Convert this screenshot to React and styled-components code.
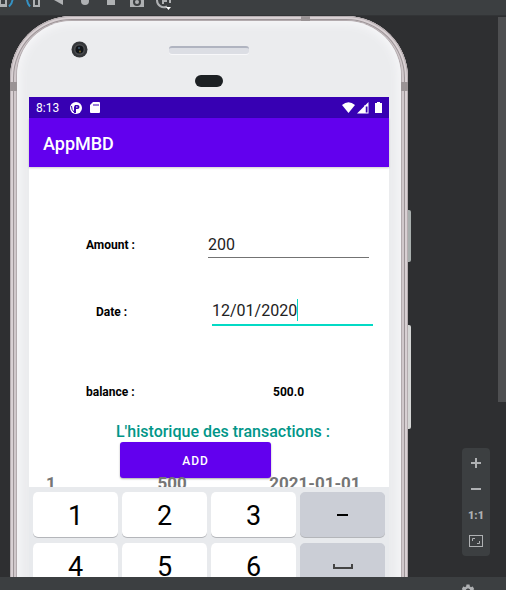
import React from "react";
import styled, { createGlobalStyle } from "styled-components";
import { MdSettings } from "react-icons/md";

const GlobalStyle = createGlobalStyle`
  * { box-sizing: border-box; }
  body { margin: 0; font-family: Roboto, sans-serif; background: #2e2f31; }
  button, input { font-family: inherit; }
`;

const Page = styled.div`
  display: flex;
  flex-direction: column;
  height: 100vh;
  overflow: hidden;
`;

const Toolbar = styled.header`
  display: flex;
  flex: none;
  gap: 4px;
  height: 15px;
  overflow: hidden;
  background: #3c3f41;
`;

const ToolButton = styled.button`
  flex: none;
  width: 22px;
  height: 15px;
  padding: 0;
  border: 0;
  background: none;

  svg { display: block; }
`;

const Stage = styled.main`
  display: grid;
  grid-template-columns: minmax(0, 1fr) 98px;
  grid-template-rows: minmax(0, 1fr);
  flex: 1;
  min-height: 0;
  overflow: hidden;
  border-top: 1px solid #323436;
`;

const Device = styled.section`
  position: relative;
  align-self: start;
  margin-left: 10px;
  padding: 5px 7px 40px;
  border-radius: 62px 62px 0 0;
  background: #d0c8cb;
  box-shadow: inset 0 0 0 1px #b5adb0, inset 0 0 0 3px #d8d0d3, inset 0 0 0 4px #9c9497;
`;

const Antenna = styled.span`
  position: absolute;
  background: #9a9395;
  ${(p) =>
    p.$side === "top"
      ? "top: 0; right: 98px; width: 9px; height: 5px;"
      : `top: 66px; ${p.$side}: 0; width: 7px; height: 9px;`}
`;

const SideKey = styled.span`
  position: absolute;
  left: 100%;
  top: ${(p) => p.$top}px;
  width: 3px;
  height: ${(p) => p.$length}px;
  border-radius: 0 2px 2px 0;
  background: ${(p) => p.$color};
`;

const Face = styled.div`
  padding: 0 12px;
  border-radius: 55px 55px 0 0;
  background: #ebecee;
  box-shadow: inset 0 0 8px 3px #f6f6f8, 0 0 0 1px #b3abae;
`;

const Forehead = styled.div`
  display: grid;
  grid-template-columns: 1fr 80px 1fr;
  align-items: start;
  height: 76px;
`;

const CameraSlot = styled.div`
  padding: 20px 0 0 42px;

  svg { display: block; }
`;

const Openings = styled.div`
  display: flex;
  flex-direction: column;
  align-items: center;
  gap: 21px;
  padding-top: 25px;
`;

const Speaker = styled.div`
  width: 80px;
  height: 8px;
  border-top: 2px solid #b0b4c0;
  border-radius: 3px;
  background: #dcdee4;
  box-shadow: 0 1px 0 #f8f8fa;
`;

const Sensor = styled.div`
  width: 28px;
  height: 12px;
  border-radius: 6px;
  background: #1c2023;
`;

const Screen = styled.div`
  background: #fff;
`;

const StatusBar = styled.div`
  display: flex;
  align-items: center;
  height: 21px;
  padding: 0 7px;
  background: #3700b3;
  color: #fff;
  font-size: 12px;
`;

const StatusIcons = styled.div`
  display: flex;
  align-items: center;
  ${(p) => (p.$end ? "margin-left: auto; gap: 2px;" : "margin-left: 10px; gap: 7px;")}
`;

const AppBar = styled.div`
  display: flex;
  align-items: center;
  height: 49px;
  padding: 1px 14px 0;
  background: #6200ee;
  color: #fff;
  box-shadow: 0 1px 2px #0003;
`;

const AppTitle = styled.h1`
  margin: 0;
  font-size: 18px;
  font-weight: 500;
`;

const Form = styled.form`
  padding-top: 64px;
`;

const FormRow = styled.div`
  display: grid;
  grid-template-columns: ${(p) => p.$label}px 1fr;
  align-items: center;
  height: 28px;
  margin-bottom: ${(p) => p.$after}px;
  padding-left: ${(p) => p.$start}px;
  padding-right: ${(p) => p.$end}px;
`;

const Label = styled.label`
  color: #000;
  font-size: 12px;
  font-weight: 700;
`;

const Balance = styled.output`
  color: #000;
  font-size: 12px;
  font-weight: 700;
`;

const Field = styled.div`
  position: relative;
  min-width: 0;
`;

const TextInput = styled.input`
  display: block;
  width: 100%;
  height: ${(p) => (p.$active ? 28 : 26)}px;
  padding: ${(p) => (p.$active ? "0 0 2px" : "0")};
  border: 0;
  border-bottom: ${(p) => (p.$active ? "2px solid #03dac5" : "1px solid #737373")};
  border-radius: 0;
  outline: none;
  background: none;
  color: #222;
  font-size: 16px;
`;

const Caret = styled.span`
  position: absolute;
  top: 1px;
  left: 85px;
  width: 1px;
  height: 22px;
  background: #03dac5;
`;

const HistoryTitle = styled.h2`
  margin: 0;
  padding-left: 28px;
  color: #019688;
  font-size: 16px;
  font-weight: 500;
  line-height: 20px;
  text-align: center;
`;

const AddButton = styled.button`
  display: block;
  width: 42%;
  height: 36px;
  margin-left: 91px;
  padding: 1px 0 0;
  border: 0;
  border-radius: 3px;
  background: #6200ee;
  color: #fff;
  font-size: 12px;
  font-weight: 500;
  letter-spacing: 1px;
  box-shadow: 0 1px 2px #0005;
`;

const History = styled.table`
  width: 100%;
  border-collapse: collapse;
  table-layout: fixed;
`;

const HistoryCell = styled.td`
  width: ${(p) => p.$width};
  height: 9px;
  padding: 0 0 0 17px;
  color: #757575;
  font-size: 17px;
  font-weight: 700;
  line-height: 9px;
`;

const HistoryText = styled.div`
  height: 9px;
  line-height: 10px;
`;

const Keyboard = styled.div`
  position: relative;
  display: grid;
  grid-template-columns: repeat(4, 1fr);
  gap: 6px 4px;
  padding: 5px 4px;
  background: #e8eaed;
`;

const Key = styled.button`
  display: flex;
  align-items: center;
  justify-content: center;
  height: 45px;
  padding: 2px 0 0;
  border: 0;
  border-radius: 5px;
  background: ${(p) => (p.$muted ? "#cbced6" : "#fff")};
  color: #000;
  font-size: 27px;
  line-height: 30px;
  box-shadow: 0 1px 0 #b4b6ba;
`;

const Aside = styled.aside`
  display: flex;
  align-items: flex-end;
  justify-content: flex-end;
  gap: 8px;
`;

const ZoomPanel = styled.div`
  display: flex;
  flex-direction: column;
  width: 28px;
  margin-bottom: 21px;
  padding: 2px 0;
  border-radius: 4px;
  background: #3c3f41;
`;

const ZoomButton = styled.button`
  display: flex;
  align-items: center;
  justify-content: center;
  height: 26px;
  padding: 0;
  border: 0;
  background: none;
  color: #afb1b3;
  font-size: 11px;
  font-weight: 900;
`;

const ScrollThumb = styled.div`
  align-self: flex-start;
  width: 8px;
  height: 385px;
  margin-top: 1px;
  background: #4e4f51;
`;

const Footer = styled.footer`
  display: flex;
  flex: none;
  justify-content: flex-end;
  height: 13px;
  padding: 6px 30px 0 0;
  overflow: hidden;
  background: #3c3f41;
`;

const FooterButton = styled.button`
  height: 16px;
  padding: 0;
  border: 0;
  background: none;
  color: #afb1b3;
  font-size: 16px;
  line-height: 0;
`;

const grey = "#afb1b3";

const tools = [
  ["Rotate left", <g key="a"><path d="M-2 0H1V4H5V0H7V7H-2Z" fill={grey} /><path d="M12.500 0Q12 4 9 6.500" fill="none" stroke="#3592c4" strokeWidth="2" /></g>],
  ["Rotate right", <g key="b"><path d="M1 0Q1.500 4 4 6.500" fill="none" stroke="#3592c4" strokeWidth="2" /><path d="M7 0H9V5H12V0H14V7H7Z" fill={grey} /></g>],
  ["Back", <path key="c" d="M2 0L11 5V0Z" fill={grey} />],
  ["Home", <circle key="d" cx="7" cy="1" r="4" fill={grey} />],
  ["Overview", <path key="e" d="M3 0H11V5H3Z" fill={grey} />],
  ["Screenshot", <g key="f"><path d="M0 -3H14V7H0Z" fill={grey} /><circle cx="7" cy="2" r="3" fill={grey} stroke="#3c3f41" strokeWidth="2" /></g>],
  ["Record", <g key="g"><path d="M1 0A7 7 0 0 0 11 6.500M14 3V0" fill="none" stroke={grey} strokeWidth="2" /><path d="M7 4V0M7 1H10V-1" fill="none" stroke={grey} strokeWidth="2" /><path d="M10 7H15L12.500 10Z" fill="#fff" /></g>],
];

const keys = ["1", "2", "3", "minus", "4", "5", "6", "space"];

function KeyFace({ name }) {
  if (name === "minus") {
    return <svg width="12" height="4"><rect y="0" width="11" height="2" fill="#000" /></svg>;
  }
  if (name === "space") {
    return <svg width="20" height="8"><path d="M1 1V5H19V1" fill="none" stroke="#444" strokeWidth="2" /></svg>;
  }
  return name;
}

export default function App() {
  return (
    <Page>
      <GlobalStyle />
      <Toolbar>
        {tools.map(([name, drawing]) => (
          <ToolButton key={name} aria-label={name}>
            <svg width="22" height="15">{drawing}</svg>
          </ToolButton>
        ))}
      </Toolbar>

      <Stage>
        <Device>
          <Antenna $side="top" />
          <Antenna $side="left" />
          <Antenna $side="right" />
          <SideKey $top={194} $length={52} $color="#a9afae" />
          <SideKey $top={309} $length={104} $color="#d5d6d5" />
          <Face>
            <Forehead>
              <CameraSlot>
                <svg width="17" height="17" viewBox="0 0 17 17">
                  <circle cx="8.500" cy="8.500" r="8" fill="#35373a" />
                  <circle cx="8.500" cy="8.500" r="5.500" fill="#4b4d50" />
                  <circle cx="8.500" cy="8.500" r="4" fill="#111418" />
                  <circle cx="8" cy="7" r="1" fill="#41586c" />
                  <circle cx="9" cy="10.500" r="1" fill="#7b6b31" />
                </svg>
              </CameraSlot>
              <Openings>
                <Speaker />
                <Sensor />
              </Openings>
            </Forehead>

            <Screen>
              <StatusBar>
                <span>8:13</span>
                <StatusIcons>
                  <svg width="14" height="14" viewBox="0 0 14 14">
                    <circle cx="7" cy="7" r="6" fill="#fff" />
                    <path d="M6 4H8.500A2 2 0 0 1 8.500 8H7V12H5V6Z" fill="#3700b3" />
                    <path d="M7 5.500H8.500V6.500H7Z" fill="#fff" />
                    <path d="M2.500 5Q2.500 9 5 11" fill="none" stroke="#3700b3" />
                  </svg>
                  <svg width="10" height="12" viewBox="0 0 10 12">
                    <path d="M3 0H9Q10 0 10 1V10Q10 11 9 11H1Q0 11 0 10V3Z" fill="#fff" />
                    <path d="M4 2V4M6 2V4M8 2V4" stroke="#3700b3" />
                  </svg>
                </StatusIcons>
                <StatusIcons $end>
                  <svg width="13" height="11" viewBox="0 0 13 11">
                    <path d="M0 3Q6.500 -2.500 13 3L6.500 11Z" fill="#fff" />
                  </svg>
                  <svg width="12" height="12" viewBox="0 0 12 12">
                    <path d="M11.500 0V11.500H0Z" fill="#fff" />
                    <path d="M8.500 4.500H10.500V10.500H8.500Z" fill="#3700b3" />
                    <path d="M8 3V11" stroke="#fff" />
                  </svg>
                  <svg width="11" height="11" viewBox="0 0 11 11">
                    <path d="M4 1H6V0H9V1H11V11H4Z" fill="#fff" />
                  </svg>
                </StatusIcons>
              </StatusBar>
              <AppBar>
                <AppTitle>AppMBD</AppTitle>
              </AppBar>

              <Form onSubmit={(e) => e.preventDefault()}>
                <FormRow $start={57} $label={122} $end={20} $after={39}>
                  <Label htmlFor="amount">Amount :</Label>
                  <Field>
                    <TextInput id="amount" defaultValue="200" />
                  </Field>
                </FormRow>
                <FormRow $start={67} $label={116} $end={16} $after={52}>
                  <Label htmlFor="date">Date :</Label>
                  <Field>
                    <TextInput id="date" $active defaultValue="12/01/2020" />
                    <Caret />
                  </Field>
                </FormRow>
                <FormRow $start={57} $label={187} $end={16} $after={16}>
                  <Label htmlFor="balance">balance :</Label>
                  <Balance id="balance">500.0</Balance>
                </FormRow>
                <HistoryTitle>L'historique des transactions :</HistoryTitle>
                <AddButton type="submit">ADD</AddButton>
                <History>
                  <tbody>
                    <tr>
                      <HistoryCell $width="31%"><HistoryText>1</HistoryText></HistoryCell>
                      <HistoryCell $width="31%"><HistoryText>500</HistoryText></HistoryCell>
                      <HistoryCell $width="38%"><HistoryText>2021-01-01</HistoryText></HistoryCell>
                    </tr>
                  </tbody>
                </History>
              </Form>

              <Keyboard>
                {keys.map((name) => (
                  <Key key={name} aria-label={name} $muted={name === "minus" || name === "space"}>
                    <KeyFace name={name} />
                  </Key>
                ))}
              </Keyboard>
            </Screen>
          </Face>
        </Device>

        <Aside>
          <ZoomPanel>
            <ZoomButton aria-label="Zoom in">
              <svg width="10" height="10"><path d="M5 0V10M0 5H10" stroke={grey} strokeWidth="2" /></svg>
            </ZoomButton>
            <ZoomButton aria-label="Zoom out">
              <svg width="10" height="2"><rect width="10" height="2" fill={grey} /></svg>
            </ZoomButton>
            <ZoomButton>1:1</ZoomButton>
            <ZoomButton aria-label="Fit to screen">
              <svg width="14" height="12" viewBox="0 0 14 12">
                <rect x="0.500" y="0.500" width="13" height="11" fill="none" stroke={grey} />
                <path d="M3.500 6V3.500H6M8 8.500H10.500V6" fill="none" stroke={grey} />
              </svg>
            </ZoomButton>
          </ZoomPanel>
          <ScrollThumb />
        </Aside>
      </Stage>

      <Footer>
        <FooterButton aria-label="Settings"><MdSettings /></FooterButton>
      </Footer>
    </Page>
  );
}
